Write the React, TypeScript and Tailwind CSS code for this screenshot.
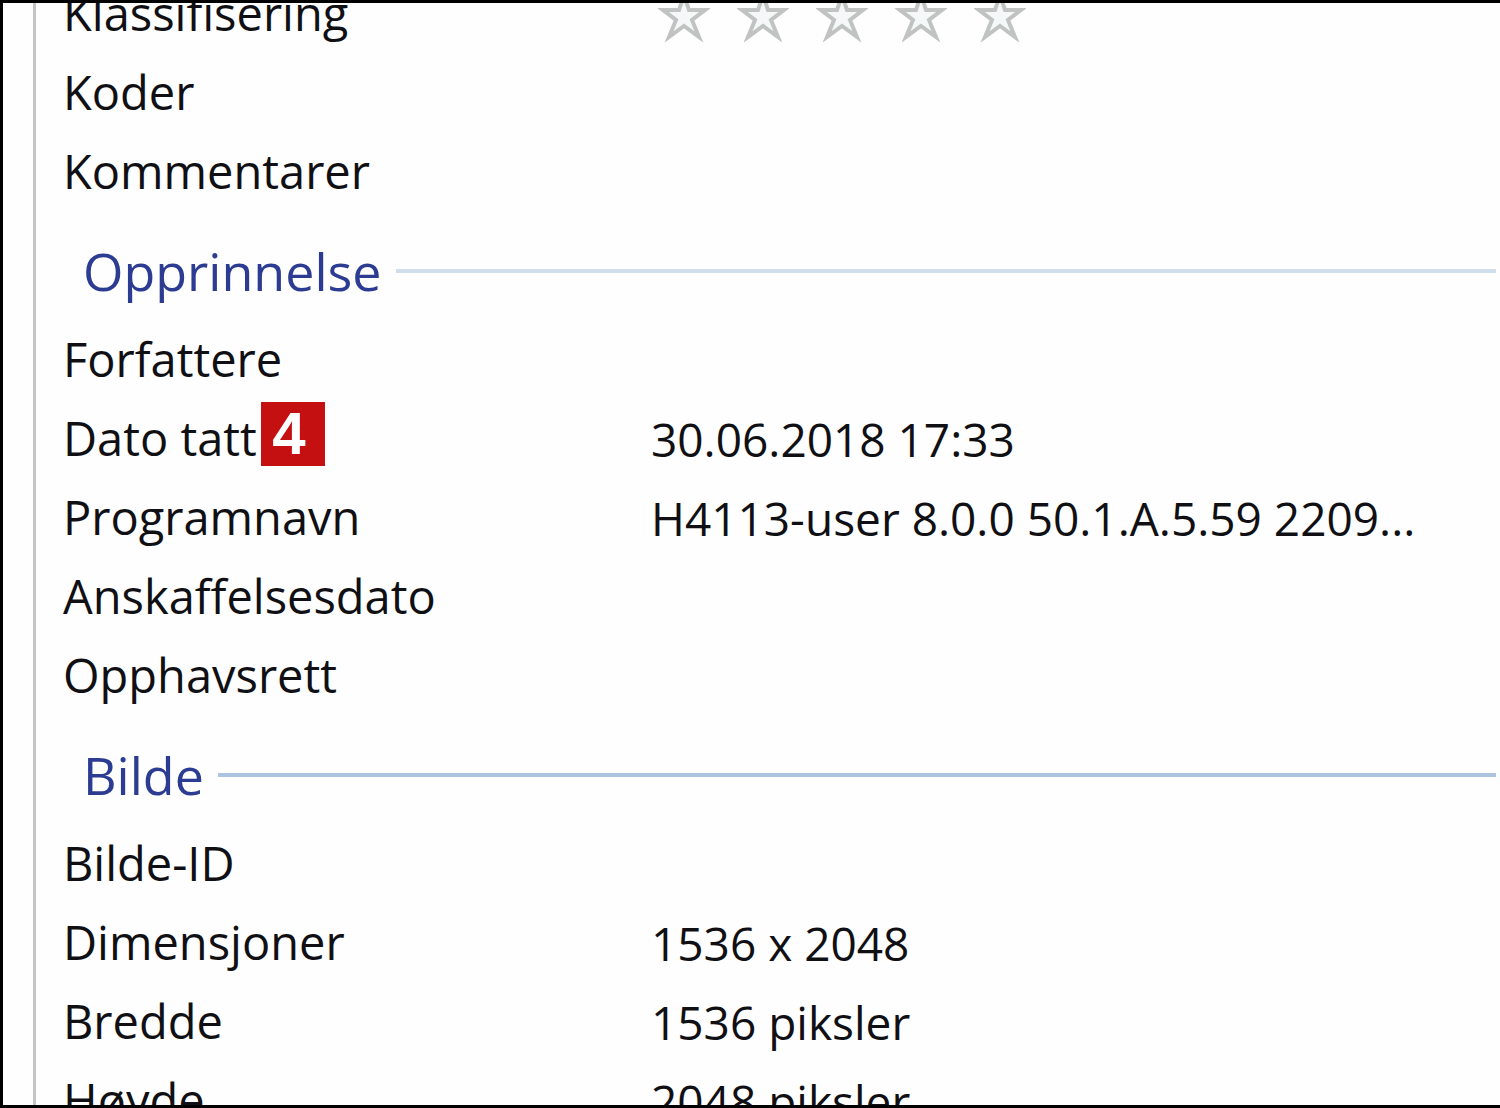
const details = [
  { label: "Klassifisering", rating: true },
  { label: "Koder" },
  { label: "Kommentarer" },
];

const groups = [
  {
    title: "Opprinnelse",
    line: "bg-[#d0deec]",
    rows: [
      { label: "Forfattere" },
      { label: "Dato tatt", badge: 4, value: "30.06.2018 17:33" },
      { label: "Programnavn", value: "H4113-user 8.0.0 50.1.A.5.59 2209..." },
      { label: "Anskaffelsesdato" },
      { label: "Opphavsrett" },
    ],
  },
  {
    title: "Bilde",
    line: "bg-[#adc4e0]",
    rows: [
      { label: "Bilde-ID" },
      { label: "Dimensjoner", value: "1536 x 2048" },
      { label: "Bredde", value: "1536 piksler" },
      { label: "Høyde", value: "2048 piksler" },
    ],
  },
];

type RowData = {
  label: string;
  value?: string;
  badge?: number;
  rating?: boolean;
};

const Rating = () => (
  <div role="group" aria-label="Klassifisering" className="flex gap-[27px] pt-1 pl-[7px]">
    {[1, 2, 3, 4, 5].map((n) => (
      <button key={n} type="button" aria-label={`${n} av 5`} className="block">
        <svg viewBox="0 0 52 52" className="block size-[52px]">
          <path
            d="M26 5 L31 20 L47 20 L34 30 L41 47 L26 36 L11 47 L18 30 L5 20 L21 20 Z"
            fill="#f4f8f8"
            stroke="#c1c3c3"
            strokeWidth="4"
          />
        </svg>
      </button>
    ))}
  </div>
);

const Row = ({ row }: { row: RowData }) => (
  <tr className="h-[79px]">
    <th scope="row" className="p-0 text-left align-middle font-normal">
      <div className="flex items-center gap-1">
        <span>{row.label}</span>
        {row.badge && (
          <span className="mb-2.5 flex size-16 items-center justify-center bg-[#c41010] pr-2 font-[family-name:'Liberation_Sans',sans-serif] text-6xl font-bold text-white">
            {row.badge}
          </span>
        )}
      </div>
    </th>
    <td className="p-0 align-middle text-[46px]">{row.rating ? <Rating /> : row.value}</td>
  </tr>
);

const App = () => {
  return (
    <main className="h-screen overflow-hidden border-y-3 border-l-3 border-black bg-[#fefefe] pl-[30px] font-[family-name:'Open_Sans',sans-serif] text-[47px] leading-none text-[#101014]">
      <div className="h-full overflow-hidden border-l-3 border-[#c4c4c6] pl-[27px]">
        <table className="-mt-[29px] w-full table-fixed border-collapse whitespace-nowrap">
          <colgroup>
            <col className="w-[588px]" />
            <col />
          </colgroup>
          <tbody>
            {details.map((row) => (
              <Row key={row.label} row={row} />
            ))}
          </tbody>
          {groups.map((group) => (
            <tbody key={group.title}>
              <tr className="h-[109px]">
                <th scope="rowgroup" colSpan={2} className="p-0 pt-2.5 pr-1 pl-5 font-normal">
                  <div className="flex items-center gap-3.5">
                    <h2 className="text-[52px] text-[#2c3c92]">{group.title}</h2>
                    <span className={`h-1 flex-1 ${group.line}`} />
                  </div>
                </th>
              </tr>
              {group.rows.map((row) => (
                <Row key={row.label} row={row} />
              ))}
            </tbody>
          ))}
        </table>
      </div>
    </main>
  );
};

export default App;
